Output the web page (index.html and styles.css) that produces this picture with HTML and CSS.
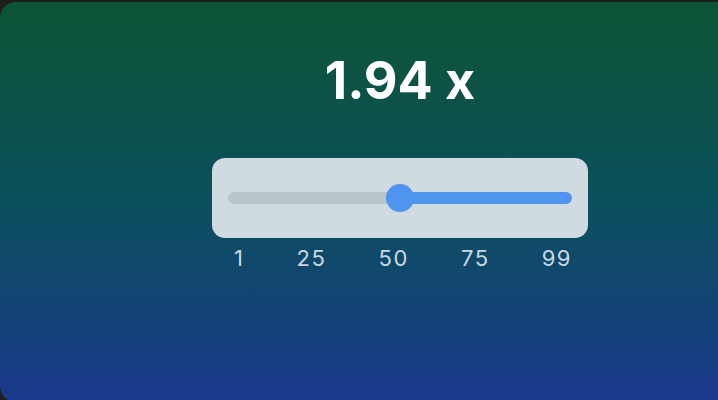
FILE: index.html
```html
<!DOCTYPE html>
<html>
<head>
<meta charset="utf-8">
<link rel="stylesheet" href="styles.css">
</head>
<body>
<div class="card">
  <div class="value">1.94 x</div>
  <div class="slider">
    <div class="track">
      <div class="fill-left"></div>
      <div class="thumb"></div>
      <div class="fill-right"></div>
    </div>
  </div>
  <div class="labels">
    <span>1</span><span>25</span><span>50</span><span>75</span><span>99</span>
  </div>
</div>
</body>
</html>
```
FILE: styles.css
```css
html, body {
  margin: 0;
  padding: 0;
  background: #1e1e1e;
  overflow: hidden;
  width: 718px;
  height: 400px;
}
body {
  padding-top: 2px;
  box-sizing: border-box;
  font-family: Inter, "Noto Sans", sans-serif;
}
.card {
  width: 718px;
  height: 400px;
  border-radius: 16px 0 0 16px;
  background: linear-gradient(to bottom, #0d5535 0%, #0b4f5c 50%, #1b398d 100%);
  display: flex;
  flex-direction: column;
  align-items: center;
  padding-top: 53px;
  padding-left: 82px;
  box-sizing: border-box;
}
.value {
  color: #ffffff;
  font-weight: 700;
  font-size: 52px;
  line-height: 1;
}
.slider {
  margin-top: 51px;
  width: 376px;
  height: 80px;
  border-radius: 13px;
  background: #cfdbe0;
  box-sizing: border-box;
  padding: 0 16px;
  display: flex;
  align-items: center;
}
.track {
  flex: 1;
  display: flex;
  align-items: center;
  height: 28px;
}
.fill-left {
  width: 160px;
  height: 12px;
  background: #b9c5ca;
  border-radius: 6px 0 0 6px;
}
.thumb {
  width: 28px;
  height: 28px;
  border-radius: 50%;
  background: #4f94ee;
  margin: 0 -2px;
  position: relative;
  z-index: 1;
}
.fill-right {
  flex: 1;
  height: 12px;
  background: #4f94ee;
  border-radius: 0 6px 6px 0;
}
.labels {
  margin-top: 9px;
  width: 338px;
  padding-left: 6px;
  display: flex;
  justify-content: space-between;
  color: #c8d8e3;
  font-size: 22px;
  line-height: 1;
  letter-spacing: 1.5px;
}
```
